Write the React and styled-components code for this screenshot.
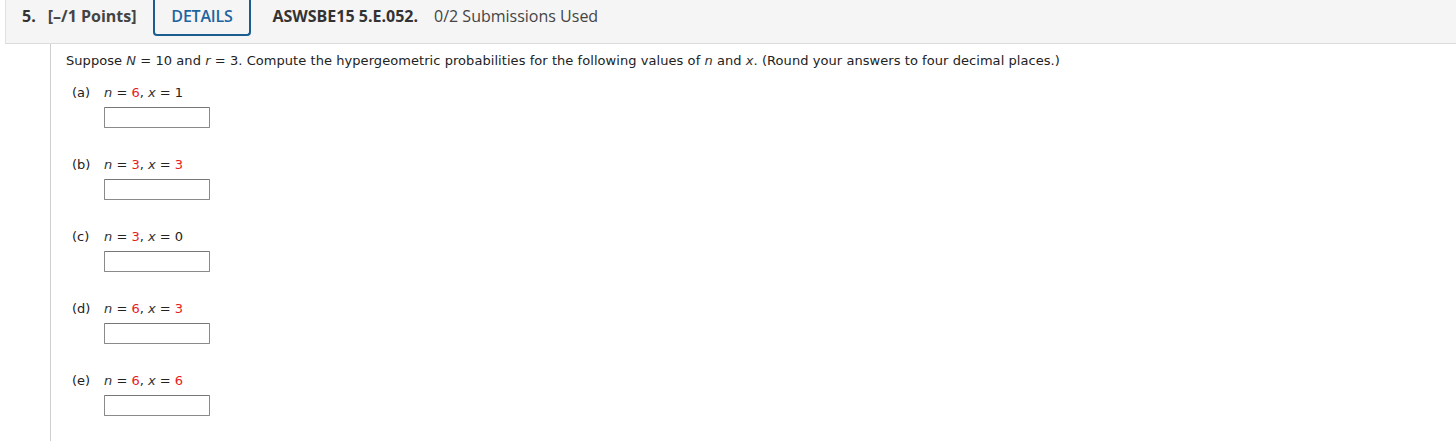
import React from 'react'
import styled, {createGlobalStyle} from 'styled-components'

const Global = createGlobalStyle`
  body {
    margin: 0;
    background: #fff;
    font-family: "DejaVu Sans", Verdana, sans-serif;
  }
`

const Page = styled.div`
  width: 1456px;
  height: 441px;
  overflow: hidden;
`

const Header = styled.div`
  display: flex;
  align-items: flex-start;
  height: 44px;
  margin-left: 5px;
  background-color: #f5f5f5;
  border-left: 1px solid #e0e0e0;
  border-bottom: 1px solid #dcdcdc;
  font-family: "Open Sans", sans-serif;
  font-size: 16px;
  line-height: 33px;
  color: #333;
  box-sizing: border-box;
  padding-left: 16px;
`

const Num = styled.span`
  font-weight: 700;
  margin-right: 12px;
`

const Points = styled.span`
  font-weight: 700;
  color: #444;
  margin-right: 17px;
`

const DetailsButton = styled.div`
  box-sizing: border-box;
  width: 98px;
  height: 36px;
  padding-right: 1px;
  text-align: center;
  border: 2px solid #1a5d8f;
  border-top: none;
  border-radius: 0 0 4px 4px;
  background: #f5f5f5;
  color: #1e64a0;
  font-weight: 600;
  letter-spacing: -0.2px;
  margin-right: 21px;
`

const Code = styled.span`
  font-weight: 700;
  margin-right: 16px;
`

const Used = styled.span`
  color: #444;
`

const Body = styled.div`
  margin-left: 50px;
  border-left: 1px solid #cfcfcf;
  height: 396px;
  padding: 9px 0 0 15px;
  font-size: 13px;
  color: #222;
`

const Prompt = styled.p`
  margin: 0 0 16px;
  line-height: 16px;
  letter-spacing: 0.06px;
`

const Var = styled.i`
  font-style: italic;
  color: #333;
`

const Red = styled.span`
  color: #e8201a;
`

const Part = styled.div`
  display: grid;
  grid-template-columns: 32px auto;
  margin-left: 6px;
  margin-bottom: 29px;
`

const Label = styled.span`
  line-height: 16px;
`

const Expr = styled.div`
  line-height: 16px;
  margin-bottom: 6px;
`

const Answer = styled.input`
  display: block;
  box-sizing: border-box;
  width: 106px;
  height: 21px;
  border: 1px solid #8a8a8a;
  border-top-color: #767676;
  border-radius: 1px;
  background: #fff;
  padding: 0 4px;
  font-size: 13px;
`

const parts = [
  {label: 'a', n: 6, nRed: true, x: 1, xRed: false},
  {label: 'b', n: 3, nRed: true, x: 3, xRed: true},
  {label: 'c', n: 3, nRed: true, x: 0, xRed: false},
  {label: 'd', n: 6, nRed: true, x: 3, xRed: true},
  {label: 'e', n: 6, nRed: true, x: 6, xRed: true},
]

const Value = ({red, children}) => (red ? <Red>{children}</Red> : <span>{children}</span>)

export default function App() {
  return (
    <Page>
      <Global />
      <Header>
        <Num>5.</Num>
        <Points>[–/1 Points]</Points>
        <DetailsButton>DETAILS</DetailsButton>
        <Code>ASWSBE15 5.E.052.</Code>
        <Used>0/2 Submissions Used</Used>
      </Header>
      <Body>
        <Prompt>
          Suppose <Var>N</Var> = 10 and <Var>r</Var> = 3. Compute the hypergeometric probabilities for the
          following values of <Var>n</Var> and <Var>x</Var>. (Round your answers to four decimal places.)
        </Prompt>
        {parts.map(p => (
          <Part key={p.label}>
            <Label>({p.label})</Label>
            <div>
              <Expr>
                <Var>n</Var> = <Value red={p.nRed}>{p.n}</Value>, <Var>x</Var> ={' '}
                <Value red={p.xRed}>{p.x}</Value>
              </Expr>
              <Answer type="text" />
            </div>
          </Part>
        ))}
      </Body>
    </Page>
  )
}
